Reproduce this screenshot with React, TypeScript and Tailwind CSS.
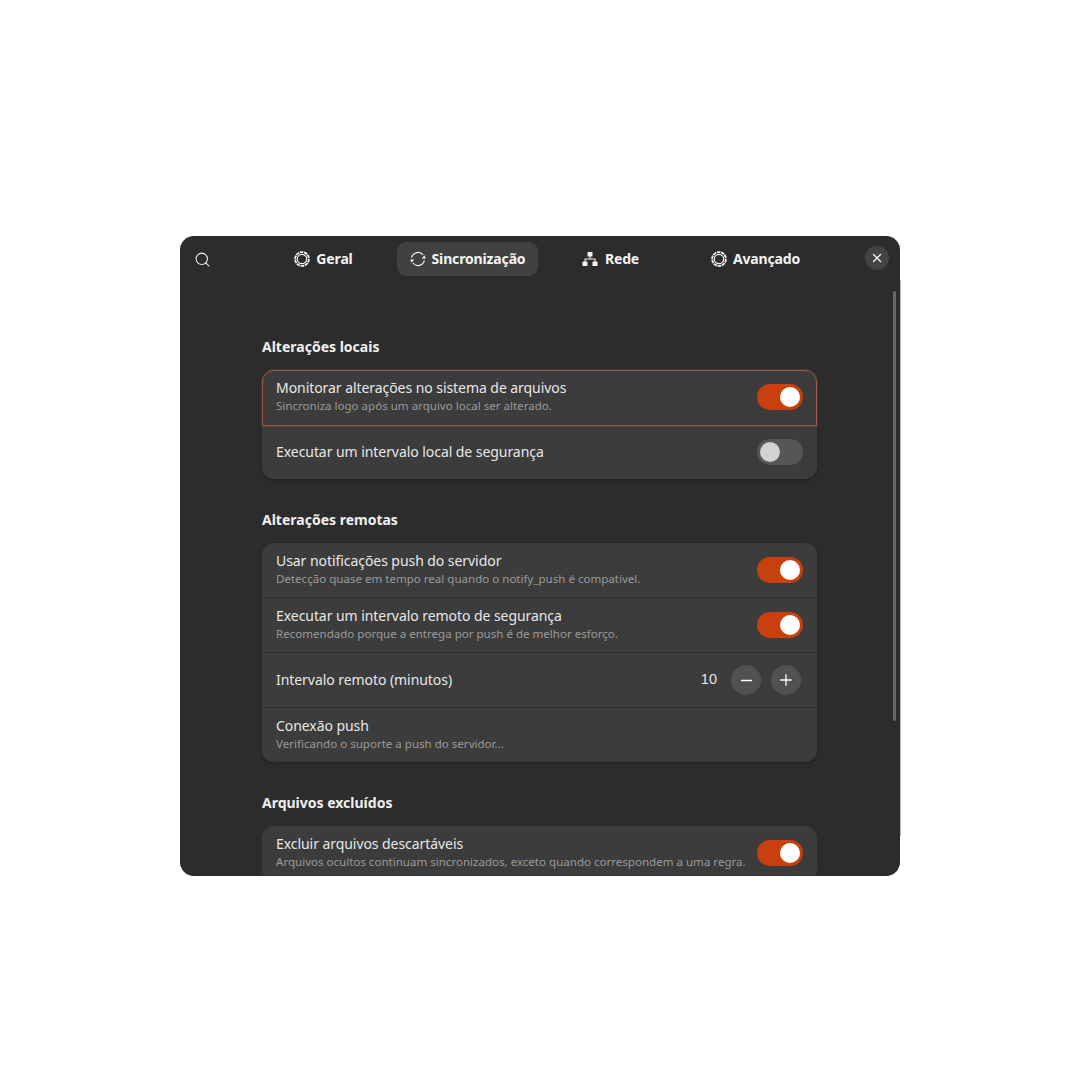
import React from 'react';
import { Minus, Plus, Search, X } from 'lucide-react';

function GearIcon() {
  return (
    <svg width="16" height="16" viewBox="0 0 16 16" fill="none" stroke="currentColor" className="shrink-0">
      <circle cx="8" cy="8" r="4.700" strokeWidth="1.2" />
      <circle cx="8" cy="8" r="6.900" strokeWidth="1.8" strokeDasharray="3.6 0.7" />
    </svg>
  );
}

function SyncIcon() {
  return (
    <svg width="16" height="16" viewBox="0 0 16 16" fill="none" className="shrink-0">
      <path d="M1.600 6.600A6.600 6.600 0 0 1 13.200 4" stroke="currentColor" strokeWidth="1.2" />
      <path d="M14.400 9.400A6.600 6.600 0 0 1 2.800 12" stroke="currentColor" strokeWidth="1.2" />
      <path d="M15.800 7.400h-4l2.600-3.200z" fill="currentColor" />
      <path d="M0.200 8.600h4l-2.600 3.200z" fill="currentColor" />
    </svg>
  );
}

function NetworkIcon() {
  return (
    <svg width="16" height="16" viewBox="0 0 16 16" fill="currentColor" className="shrink-0 mr-[1px]">
      <rect x="5.500" y="1" width="5" height="4.500" rx="0.6" />
      <rect x="0.500" y="10.500" width="5" height="4.500" rx="0.6" />
      <rect x="10.500" y="10.500" width="5" height="4.500" rx="0.6" />
      <path d="M7.500 5h1v2.500h5v3.500h-1V8.500h-9V11h-1V7.500h5z" />
    </svg>
  );
}

function Tab({ icon, label, active, className }: { icon: React.ReactNode; label: string; active?: boolean; className?: string }) {
  return (
    <div className={`flex items-center justify-center gap-[6px] w-[141px] h-[34px] rounded-[9px] text-[14px] tracking-[-0.15px] font-bold text-[#f4f4f4] ${active ? 'bg-[#414141]' : ''} ${className ?? ''}`}>
      {icon}
      <span className="pb-[2px]">{label}</span>
    </div>
  );
}

function Toggle({ on }: { on: boolean }) {
  return (
    <div className={`flex items-center w-[46px] h-[26px] rounded-full px-[3px] shrink-0 ${on ? 'bg-[#c9400f] justify-end' : 'bg-[#565656] justify-start'}`}>
      <div className={`size-[20px] rounded-full ${on ? 'bg-white' : 'bg-[#d2d2d2]'}`} />
    </div>
  );
}

function RowText({ title, sub }: { title: string; sub?: string }) {
  return (
    <div className="flex flex-col pb-[2px]">
      <div className="text-[14px] tracking-[-0.06px] leading-[19px] text-[#e8e8e8]">{title}</div>
      {sub && <div className="text-[11.550px] leading-[16px] mt-[1px] text-[#9a9a9a] whitespace-nowrap">{sub}</div>}
    </div>
  );
}

function Row({ title, sub, children, last }: { title: string; sub?: string; children?: React.ReactNode; last?: boolean }) {
  return (
    <div className={`flex items-center justify-between px-[14px] ${last ? 'h-[54px]' : 'h-[55px] border-b border-[#2e2e2e]'}`}>
      <RowText title={title} sub={sub} />
      {children}
    </div>
  );
}

function SpinButton({ children }: { children: React.ReactNode }) {
  return <div className="flex items-center justify-center size-[30px] rounded-full bg-[#515151] text-white">{children}</div>;
}

function SectionTitle({ children, className }: { children: React.ReactNode; className: string }) {
  return <h2 className={`text-[14px] font-bold leading-[20px] text-[#f0f0f0] ${className}`}>{children}</h2>;
}

export default function App() {
  return (
    <div className="flex justify-center w-[1080px] h-[1080px] pt-[236px] bg-white font-['Noto_Sans',sans-serif]">
      <div className="relative w-[720px] h-[640px]">
        <div className="relative flex flex-col h-full rounded-[14px] overflow-hidden bg-[#2c2c2c]">
          <header className="relative flex items-center h-[46px] shrink-0">
            <Search size={17} strokeWidth={1.5} className="ml-[14px] text-[#efefef]" />
            <div className="flex items-center gap-[3px] ml-[42px]">
              <Tab icon={<GearIcon />} label="Geral" />
              <Tab icon={<SyncIcon />} label="Sincronização" active />
              <Tab icon={<NetworkIcon />} label="Rede" className="pr-[2px]" />
              <Tab icon={<GearIcon />} label="Avançado" />
            </div>
            <div className="absolute right-[11px] top-[10px] flex items-center justify-center size-[24px] rounded-full bg-[#444444] text-white">
              <X size={14} strokeWidth={2.2} />
            </div>
          </header>

          <main className="flex-1 overflow-hidden pl-[82px] pr-[83px] pt-[55px]">
            <SectionTitle className="mb-[13px]">Alterações locais</SectionTitle>
            <section className="rounded-[12px] bg-[#3c3c3c] shadow-[0_1px_3px_rgba(0,0,0,0.25)]">
              <div className="flex items-center justify-between h-[56px] px-[13px] pb-[2px] border border-[#9a5a44] rounded-t-[12px] shadow-[0_0_0_1px_rgba(154,90,68,0.3)]">
                <RowText title="Monitorar alterações no sistema de arquivos" sub="Sincroniza logo após um arquivo local ser alterado." />
                <Toggle on />
              </div>
              <div className="flex items-center justify-between h-[53px] px-[14px] pb-[1px]">
                <RowText title="Executar um intervalo local de segurança" />
                <Toggle on={false} />
              </div>
            </section>

            <SectionTitle className="mt-[31px] mb-[13px]">Alterações remotas</SectionTitle>
            <section className="rounded-[12px] bg-[#3c3c3c] shadow-[0_1px_3px_rgba(0,0,0,0.25)]">
              <Row title="Usar notificações push do servidor" sub="Detecção quase em tempo real quando o notify_push é compatível.">
                <Toggle on />
              </Row>
              <Row title="Executar um intervalo remoto de segurança" sub="Recomendado porque a entrega por push é de melhor esforço.">
                <Toggle on />
              </Row>
              <Row title="Intervalo remoto (minutos)">
                <div className="flex items-center gap-[10px] pr-[2px]">
                  <span className="mr-[4px] text-[14.500px] text-[#e4e4e4] font-['Liberation_Sans',sans-serif]">10</span>
                  <SpinButton><Minus size={17} strokeWidth={1.8} /></SpinButton>
                  <SpinButton><Plus size={18} strokeWidth={1.7} /></SpinButton>
                </div>
              </Row>
              <Row last title="Conexão push" sub="Verificando o suporte a push do servidor…" />
            </section>

            <SectionTitle className="mt-[31px] mb-[13px]">Arquivos excluídos</SectionTitle>
            <section className="rounded-[12px] bg-[#3c3c3c]">
              <Row title="Excluir arquivos descartáveis" sub="Arquivos ocultos continuam sincronizados, exceto quando correspondem a uma regra.">
                <Toggle on />
              </Row>
            </section>
          </main>

          {/* overlay scrollbar */}
          <div className="absolute right-[4px] top-[55px] w-[3px] h-[430px] rounded-full bg-[#666666]" />
        </div>
        {/* faint edge on the right of the window */}
        <div className="absolute left-full top-[44px] bottom-[40px] w-[1px] bg-[#b8b8b8]" />
      </div>
    </div>
  );
}
